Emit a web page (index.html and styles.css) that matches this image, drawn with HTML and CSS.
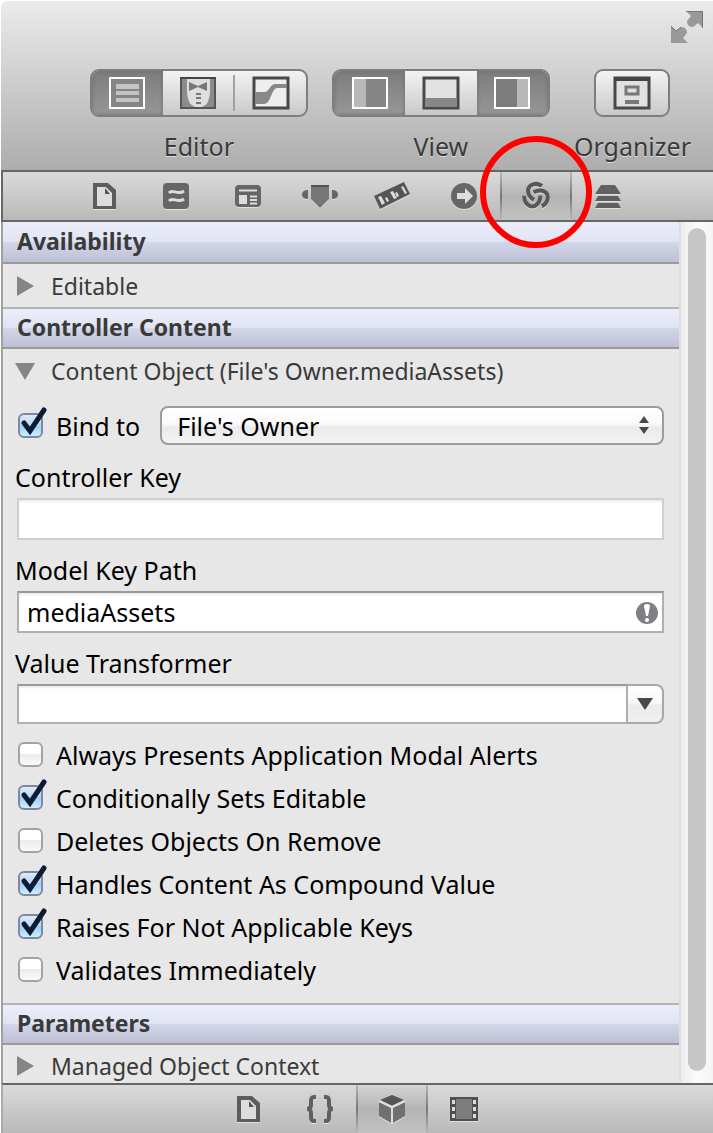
FILE: index.html
```html
<!DOCTYPE html>
<html lang="en">
<head>
    <meta charset="UTF-8">
    <meta name="viewport" content="width=device-width, initial-scale=1.0">
    <title>Bindings Inspector</title>
    <link rel="stylesheet" href="styles.css">
</head>
<body>
    <div class="window">
        <header class="toolbar">
            <button type="button" class="fullscreen" aria-label="Full screen">
                <svg width="32" height="32" viewBox="0 0 32 32"><path d="M15 0H32V17L27 12L22 16Q16 16 16 10L20 5ZM0 15L5 20L10 16Q16 16 16 22L12 27L17 32H0Z" fill="#999"/><path d="M15 .5H31.500V17M0 15L5 20L10 16" fill="none" stroke="#777"/></svg>
            </button>
            <div class="groups">
                <div class="group">
                    <div class="segments">
                        <button type="button" class="segment on" aria-label="Standard editor">
                            <svg width="36" height="32" viewBox="0 0 36 32"><path d="M1 1H35V31H1Z" fill="#858585" stroke="#fff" stroke-width="2"/><path d="M7 7H30V12H7ZM7 14H30V18H7ZM7 21H30V25H7Z" fill="#c4c4c4"/></svg>
                        </button>
                        <button type="button" class="segment" aria-label="Assistant editor">
                            <svg width="36" height="32" viewBox="0 0 36 32"><path d="M1 1H35V31H1Z" fill="#8c8c8c" stroke="#555" stroke-width="2"/><path d="M7 2H30V16Q29 28 22 30H15Q8 28 7 16Z" fill="#dedede"/><path d="M9 5L18 9L27 5V14L18 10L9 14ZM16 16H21V18H16ZM16 20H21V22H16ZM16 25H21V27H16Z" fill="#777"/><path d="M0 1H36" stroke="#444" stroke-width="2"/></svg>
                        </button>
                        <button type="button" class="segment divided" aria-label="Version editor">
                            <svg width="36" height="32" viewBox="0 0 36 32"><path d="M1 1H35V31H1Z" fill="#eee" stroke="#484848" stroke-width="3"/><path d="M2 15H11C17 15 16 7 23 7H34V11H24C18 12 18 27 11 27H2Z" fill="#888"/></svg>
                        </button>
                    </div>
                    <span class="caption">Editor</span>
                </div>
                <div class="group">
                    <div class="segments">
                        <button type="button" class="segment on" aria-label="Navigator">
                            <svg width="36" height="32" viewBox="0 0 36 32"><path d="M1 1H35V31H1Z" fill="#858585" stroke="#fff" stroke-width="2"/><path d="M2 2H14V30H2Z" fill="#b8b8b8"/></svg>
                        </button>
                        <button type="button" class="segment" aria-label="Debug area">
                            <svg width="36" height="32" viewBox="0 0 36 32"><path d="M1 1H35V31H1Z" fill="#e2e2e2" stroke="#484848" stroke-width="3"/><path d="M2 21H34V30H2Z" fill="#888"/></svg>
                        </button>
                        <button type="button" class="segment on" aria-label="Utilities">
                            <svg width="36" height="32" viewBox="0 0 36 32"><path d="M1 1H35V31H1Z" fill="#7c7c7c" stroke="#fff" stroke-width="2"/><path d="M23 2H34V30H23Z" fill="#b8b8b8"/></svg>
                        </button>
                    </div>
                    <span class="caption">View</span>
                </div>
                <div class="group">
                    <div class="segments single">
                        <button type="button" class="segment" aria-label="Organizer">
                            <svg width="36" height="32" viewBox="0 0 36 32"><path d="M1 1H35V31H1Z" fill="#e0e0e0" stroke="#484848" stroke-width="3"/><path d="M0 2H36" stroke="#444" stroke-width="4"/><path d="M12 10H24V17H12Z" fill="none" stroke="#777" stroke-width="3"/><path d="M11 23H25V27H11Z" fill="#777"/></svg>
                        </button>
                    </div>
                    <span class="caption">Organizer</span>
                </div>
            </div>
        </header>

        <nav class="tabs inspector-tabs">
            <button type="button" class="tab" aria-label="File">
                <svg width="28" height="28" viewBox="0 0 28 28"><path d="M3 1H18L26 8V27H3Z" fill="#5c5c5c"/><path d="M7 5H16L22 11V24H7Z" fill="#ddd"/><path d="M15 6L20 12H15Z" fill="#555"/></svg>
            </button>
            <button type="button" class="tab" aria-label="Quick Help">
                <svg width="28" height="28" viewBox="0 0 28 28"><rect x="1" y="1" width="26" height="26" rx="4" fill="#666"/><path d="M7 11C11 6 15 14 22 9M7 19C11 14 15 22 22 17" fill="none" stroke="#ddd" stroke-width="3"/></svg>
            </button>
            <button type="button" class="tab" aria-label="Identity">
                <svg width="28" height="28" viewBox="0 0 28 28"><rect x="1" y="3" width="26" height="22" rx="4" fill="#666"/><path d="M5 8.500H23M16 14.500H23M16 18H23M16 21.500H23" stroke="#ddd" stroke-width="2"/><path d="M5 13H13V22H5Z" fill="#ddd"/></svg>
            </button>
            <button type="button" class="tab" aria-label="Attributes">
                <svg width="38" height="28" viewBox="0 0 38 28"><path d="M10 3H28V17L19 26L10 17Z" fill="#777"/><path d="M10 4H28" stroke="#555" stroke-width="2"/><path d="M7 8V17Q1 17 1 12.500T7 8ZM31 8V17Q37 17 37 12.500T31 8Z" fill="#666"/></svg>
            </button>
            <button type="button" class="tab" aria-label="Size">
                <svg width="38" height="30" viewBox="0 0 38 30"><path d="M1 15L31 1L37 13L7 28Z" fill="#555"/><path d="M5 16L8 15L12 22L9 24ZM12 17L14 16L16 20L14 21ZM17 11L20 10L24 17L21 18ZM22 12L24 11L26 15L24 16ZM28 6L30 5L34 12L32 13Z" fill="#ddd"/></svg>
            </button>
            <button type="button" class="tab" aria-label="Connections">
                <svg width="28" height="28" viewBox="0 0 28 28"><circle cx="14" cy="14" r="13" fill="#666"/><path d="M7 11H15V6L23 14L15 22V17H7Z" fill="#ddd"/></svg>
            </button>
            <button type="button" class="tab current" aria-label="Bindings">
                <svg width="30" height="30" viewBox="0 0 30 30">
                    <g fill="none" stroke="#585858" stroke-width="4">
                        <path id="knot" d="M21 5C16 1 7 3 7 10C7 14 10 17 13 19"/>
                        <use href="#knot" transform="rotate(120 15 15)"/>
                        <use href="#knot" transform="rotate(240 15 15)"/>
                    </g>
                </svg>
                <span class="ring"></span>
            </button>
            <button type="button" class="tab" aria-label="View Effects">
                <svg width="28" height="28" viewBox="0 0 28 28"><path d="M7 3H21L27 12H1ZM4 14H24L27 19H1ZM4 21H24L27 26H1Z" fill="#606060"/></svg>
            </button>
        </nav>

        <main class="panel">
            <form class="content">
                <h2>Availability</h2>
                <button type="button" class="disclosure" aria-expanded="false">
                    <svg width="20" height="20" viewBox="0 0 20 20"><path d="M1 0L18 10L1 20Z"/></svg>
                    Editable
                </button>

                <h2 class="ruled">Controller Content</h2>
                <button type="button" class="disclosure" aria-expanded="true">
                    <svg width="20" height="20" viewBox="0 0 20 20"><path d="M-1 2H19L9 19Z"/></svg>
                    Content Object (File's Owner.mediaAssets)
                </button>

                <div class="fields">
                    <div class="bind-row">
                        <label class="option">
                            <span class="check"><input type="checkbox" checked><svg width="30" height="30" viewBox="0 0 30 30"><path d="M6 16L12 24L26 3"/></svg></span>
                            Bind to
                        </label>
                        <div class="popup">
                            <select aria-label="Bind to">
                                <option>File's Owner</option>
                            </select>
                            <svg width="10" height="18" viewBox="0 0 10 18"><path d="M0 7L5 0L10 7ZM0 11L5 18L10 11Z" fill="#484848"/></svg>
                        </div>
                    </div>

                    <label class="field-label" for="controller-key">Controller Key</label>
                    <input type="text" id="controller-key" class="text-field dim" disabled>

                    <label class="field-label" for="key-path">Model Key Path</label>
                    <div class="key-path">
                        <input type="text" id="key-path" class="text-field" value="mediaAssets">
                        <svg width="22" height="22" viewBox="0 0 22 22"><circle cx="11" cy="11" r="11" fill="#7f8084"/><path d="M8 4Q8 2 11 2T14 4L12 14H10Z" fill="#fff"/><circle cx="11" cy="18" r="2" fill="#fff"/></svg>
                    </div>

                    <label class="field-label" for="transformer">Value Transformer</label>
                    <div class="combo">
                        <input type="text" id="transformer" class="text-field">
                        <button type="button" aria-label="Show transformers">
                            <svg width="16" height="12" viewBox="0 0 16 12"><path d="M0 0H16L8 12Z" fill="#484848"/></svg>
                        </button>
                    </div>

                    <div class="options">
                        <label class="option">
                            <span class="check"><input type="checkbox"><svg width="30" height="30" viewBox="0 0 30 30"><path d="M6 16L12 24L26 3"/></svg></span>
                            Always Presents Application Modal Alerts
                        </label>
                        <label class="option">
                            <span class="check"><input type="checkbox" checked><svg width="30" height="30" viewBox="0 0 30 30"><path d="M6 16L12 24L26 3"/></svg></span>
                            Conditionally Sets Editable
                        </label>
                        <label class="option">
                            <span class="check"><input type="checkbox"><svg width="30" height="30" viewBox="0 0 30 30"><path d="M6 16L12 24L26 3"/></svg></span>
                            Deletes Objects On Remove
                        </label>
                        <label class="option">
                            <span class="check"><input type="checkbox" checked><svg width="30" height="30" viewBox="0 0 30 30"><path d="M6 16L12 24L26 3"/></svg></span>
                            Handles Content As Compound Value
                        </label>
                        <label class="option">
                            <span class="check"><input type="checkbox" checked><svg width="30" height="30" viewBox="0 0 30 30"><path d="M6 16L12 24L26 3"/></svg></span>
                            Raises For Not Applicable Keys
                        </label>
                        <label class="option">
                            <span class="check"><input type="checkbox"><svg width="30" height="30" viewBox="0 0 30 30"><path d="M6 16L12 24L26 3"/></svg></span>
                            Validates Immediately
                        </label>
                    </div>
                </div>

                <h2 class="ruled">Parameters</h2>
                <button type="button" class="disclosure last" aria-expanded="false">
                    <svg width="20" height="20" viewBox="0 0 20 20"><path d="M1 0L18 10L1 20Z"/></svg>
                    Managed Object Context
                </button>
            </form>
            <div class="scroller"><div class="thumb"></div></div>
        </main>

        <nav class="tabs library-tabs">
            <button type="button" class="tab" aria-label="File templates">
                <svg width="28" height="28" viewBox="0 0 28 28"><path d="M3 1H18L26 8V27H3Z" fill="#5c5c5c"/><path d="M7 5H16L22 11V24H7Z" fill="#ddd"/><path d="M15 6L20 12H15Z" fill="#555"/></svg>
            </button>
            <button type="button" class="tab" aria-label="Code snippets">
                <svg width="28" height="28" viewBox="0 0 28 28"><path d="M10 2H8Q5 2 5 6V10Q5 14 1 14Q5 14 5 18V22Q5 26 8 26H10M18 2H20Q23 2 23 6V10Q23 14 27 14Q23 14 23 18V22Q23 26 20 26H18" fill="none" stroke="#606060" stroke-width="4"/></svg>
            </button>
            <button type="button" class="tab current" aria-label="Objects">
                <svg width="28" height="28" viewBox="0 0 28 28"><path d="M14 0L26 5L14 11L2 5Z" fill="#555"/><path d="M1 7L13 13V28L1 21ZM27 7L15 13V28L27 21Z" fill="#707070"/><path d="M1 6L14 12L27 6M14 12V28" fill="none" stroke="#ddd" stroke-width="2"/></svg>
            </button>
            <button type="button" class="tab" aria-label="Media">
                <svg width="28" height="24" viewBox="0 0 28 24"><path d="M0 0H28V24H0Z" fill="#505050"/><path d="M6 2H22V22H6Z" fill="#7c7c7c"/><path d="M2 3H5V7H2ZM2 10H5V14H2ZM2 17H5V21H2ZM23 3H26V7H23ZM23 10H26V14H23ZM23 17H26V21H23Z" fill="#ddd"/></svg>
            </button>
        </nav>
    </div>
</body>
</html>
```
FILE: styles.css
```css
:root {
    --panel: #e7e7e7;
    --line: #9a9a9c;
    --dark-line: #666;
    --text: #3a3a3a;
}

* {
    margin: 0;
    padding: 0;
    box-sizing: border-box;
}

body {
    background-color: white;
    color: black;
    font-family: "Noto Sans", "Lucida Grande", sans-serif;
    font-size: 25px;
    line-height: 32px;
}

button,
input,
select {
    font: inherit;
    color: inherit;
}

button {
    border: none;
    background: none;
}

svg {
    display: block;
    flex: none;
    overflow: visible;
}

.window {
    display: flex;
    flex-direction: column;
    min-height: 100vh;
    padding: 1px 0 1px 1px;
}

/* Toolbar */
.toolbar {
    height: 169px;
    padding: 10px 10px 0 0;
    border-radius: 6px 0 0 0;
    background: linear-gradient(#ebebeb, #adadad);
}

.fullscreen {
    display: block;
    margin-left: auto;
}

.groups {
    display: flex;
    justify-content: flex-end;
    gap: 24px;
    padding: 26px 12px 0 0;
}

.group {
    display: flex;
    flex-direction: column;
    align-items: center;
    gap: 13px;
}

.segments {
    display: flex;
    width: 218px;
    height: 48px;
    border: 2px solid #7e7e7e;
    border-radius: 9px;
    background: linear-gradient(#f3f3f3, #c9c9c9);
    overflow: hidden;
}

.segments.single {
    width: 76px;
}

.segment {
    flex: 1;
    display: flex;
    align-items: center;
    justify-content: center;
}

.segment.on {
    background: linear-gradient(#7d7d7d, #979797);
    box-shadow: inset 0 0 4px #6c6c6c;
}

.segment.divided {
    border-left: 2px solid #aaa;
    border-image: linear-gradient(transparent 10%, #a2a2a2 10%, #a2a2a2 90%, transparent 90%) 1;
}

.caption {
    color: var(--text);
    text-shadow: 0 1px 0 #ddd;
}

/* Icon tabs */
.tabs {
    display: flex;
    justify-content: center;
    height: 52px;
    padding-right: 4px;
    border: solid var(--dark-line);
    border-width: 2px 0 2px 2px;
    background: linear-gradient(#dadada, #b9b9b9);
}

.library-tabs {
    height: 50px;
    border-bottom: none;
    border-left-color: #aaa;
}

.tab {
    position: relative;
    display: flex;
    align-items: center;
    justify-content: center;
    width: 72px;
}

.tab svg {
    filter: drop-shadow(0 1px 0 #e0e0e0);
}

.tab.current {
    border: solid transparent;
    border-width: 0 2px;
    border-image: linear-gradient(#bbb, #777, #bbb) 1;
    background: linear-gradient(#d4d4d4, #b4b4b4 50%, #c2c2c2);
}

.ring {
    position: absolute;
    z-index: 1;
    top: -36px;
    left: -22px;
    width: 112px;
    height: 112px;
    border: 6px solid #f00;
    border-radius: 50%;
    pointer-events: none;
}

/* Inspector panel */
.panel {
    flex: 1;
    display: flex;
    border-left: 2px solid #a0a0a0;
    background-color: var(--panel);
}

.content {
    flex: 1;
    min-width: 0;
}

h2 {
    height: 42px;
    padding-left: 14px;
    border-bottom: 2px solid var(--line);
    background: linear-gradient(#ecedfa, #e0e4f2 50%, #d4d7e8 50%, #bdbfd6);
    color: var(--text);
    font-size: 23px;
    line-height: 38px;
}

h2.ruled {
    border-top: 2px solid #b4b4b4;
    line-height: 36px;
}

.disclosure {
    display: flex;
    align-items: center;
    gap: 15px;
    width: 100%;
    height: 43px;
    padding-left: 13px;
    color: var(--text);
    font-size: 23px;
}

.disclosure.last {
    height: 38px;
    padding-top: 4px;
}

.disclosure path {
    fill: #858585;
}

.fields {
    padding: 14px 15px 12px 12px;
}

.bind-row {
    display: flex;
    align-items: center;
    gap: 20px;
    margin-bottom: 16px;
}

.popup {
    position: relative;
    flex: 1;
}

.popup select {
    display: block;
    width: 100%;
    height: 39px;
    padding: 0 40px 0 15px;
    border: 2px solid #9c9c9c;
    border-radius: 8px;
    background: linear-gradient(white, #fafafa 45%, #ebebeb 55%, #f3f3f3);
    appearance: none;
}

.popup svg {
    position: absolute;
    top: 10px;
    right: 15px;
    pointer-events: none;
}

.field-label {
    display: block;
    margin: 14px 0 5px;
}

.text-field {
    display: block;
    width: 100%;
    height: 42px;
    padding: 0 8px;
    border: 2px solid #b0b0b0;
    border-top-color: #999;
    background-color: white;
    box-shadow: inset 0 2px 2px #eee;
}

.text-field.dim {
    border-color: #d0d0d0;
}

#controller-key,
.key-path,
.combo {
    width: auto;
    margin-left: 2px;
}

#controller-key {
    width: calc(100% - 2px);
}

.key-path {
    position: relative;
}

.key-path svg {
    position: absolute;
    top: 11px;
    right: 6px;
}

.combo {
    display: flex;
}

.combo .text-field {
    flex: 1;
    min-width: 0;
    height: 40px;
}

.combo button {
    display: flex;
    align-items: center;
    justify-content: center;
    width: 36px;
    border: 2px solid #a8a8a8;
    border-left: none;
    border-radius: 0 8px 8px 0;
    background: linear-gradient(white, #f9f9f9 45%, #ebebeb 55%, #f0f0f0);
}

.options {
    margin-top: 9px;
}

.option {
    display: flex;
    align-items: center;
    gap: 13px;
    padding-left: 3px;
}

.options .option {
    height: 43px;
}

.check {
    position: relative;
    width: 25px;
    height: 25px;
}

.check input {
    display: block;
    width: 25px;
    height: 25px;
    border: 2px solid #a3a3a3;
    border-radius: 6px;
    background: linear-gradient(white 45%, #ececec 50%, #fafafa);
    appearance: none;
}

.check input:checked {
    border-color: #83869f;
    background: linear-gradient(#dcecfb, #b4d7f7 50%, #9ccdf7 50%, #c8f0ff);
}

.check svg {
    position: absolute;
    top: -6px;
    left: 0;
    visibility: hidden;
    pointer-events: none;
}

.check input:checked + svg {
    visibility: visible;
}

.check path {
    fill: none;
    stroke: #0b1c33;
    stroke-width: 5;
    stroke-linecap: round;
}

.scroller {
    width: 34px;
    padding: 6px 8px 12px 7px;
    border-left: 2px solid #dedede;
    background: linear-gradient(to right, #ececec, #fcfcfc 50%, #f4f4f4);
}

.thumb {
    width: 18px;
    height: 100%;
    border-radius: 9px;
    background-color: #c6c6c6;
}
```
